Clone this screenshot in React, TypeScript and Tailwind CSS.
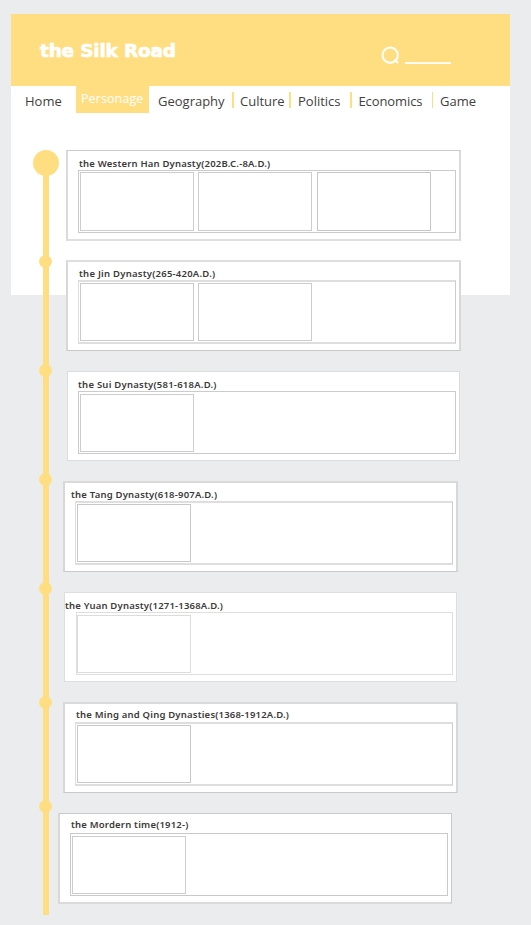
type Era = {
  title: string;
  titleClass: string;
  card: string;
  strip: string;
  frames: string[];
};

const eras: Era[] = [
  {
    title: "the Western Han Dynasty(202B.C.-8A.D.)",
    titleClass: "ml-[11px] leading-[23px] tracking-[0.19px]",
    card: "ml-[-6px] w-[395px] h-[91px] pt-px border-t border-x-2 border-b-2 border-x-[#dadada] border-t-[#cbcbcb] border-b-[#dfdfdf]",
    strip: "ml-[10px] w-[378px] h-[63px] pt-px border-[#cbcbcb]",
    frames: ["h-[59px] border-[#cdcdcd]", "ml-1 h-[59px] border-[#cdcdcd]", "ml-[5px] h-[59px] border-[#c6c6c6]"],
  },
  {
    title: "the Jin Dynasty(265-420A.D.)",
    titleClass: "ml-[11px] leading-[23px] tracking-[0.24px]",
    card: "mt-[19px] ml-[-6px] w-[395px] h-[91px] border-t-2 border-x-2 border-b border-x-[#d8d8d8] border-t-[#dedede] border-b-[#c9c9c9]",
    strip: "ml-[10px] w-[378px] h-[64px] border-t-2 border-b-2 pt-px border-[#dedede] border-r-[#cdcdcd]",
    frames: ["h-[58px] border-[#cbcbcb]", "ml-1 h-[58px] border-[#cdcdcd]"],
  },
  {
    title: "the Sui Dynasty(581-618A.D.)",
    titleClass: "ml-[10px] leading-[23px] tracking-[0.24px]",
    card: "mt-[20px] ml-[-5px] w-[393px] h-[90px] pt-px border border-[#dcdcdc]",
    strip: "ml-[10px] w-[378px] h-[63px] pt-[2px] border-[#cbcbcb]",
    frames: ["h-[58px] border-[#cdcdcd]"],
  },
  {
    title: "the Tang Dynasty(618-907A.D.)",
    titleClass: "ml-[6px] leading-[23px] tracking-[0.21px]",
    card: "mt-[20px] ml-[-9px] w-[395px] h-[91px] border-t-2 border-x-2 border-b border-x-[#d8d8d8] border-t-[#dadada] border-b-[#c9c9c9]",
    strip: "ml-[10px] w-[378px] h-[64px] border-t-2 border-b-2 pt-px border-[#dedede] border-r-[#cdcdcd]",
    frames: ["h-[58px] border-[#c9c9c9]"],
  },
  {
    title: "the Yuan Dynasty(1271-1368A.D.)",
    titleClass: "ml-0 leading-[23px] tracking-[0.2px]",
    card: "mt-[20px] ml-[-8px] w-[393px] h-[90px] pt-px border border-[#dedede]",
    strip: "ml-[11px] w-[377px] h-[63px] pt-[2px] border-[#dedede]",
    frames: ["h-[58px] border-[#dcdcdc] -ml-px"],
  },
  {
    title: "the Ming and Qing Dynasties(1368-1912A.D.)",
    titleClass: "ml-[11px] leading-[21px] tracking-[0.2px]",
    card: "mt-[20px] ml-[-9px] w-[395px] h-[91px] border-t-2 border-x-2 border-b border-x-[#d8d8d8] border-t-[#dadada] border-b-[#c9c9c9]",
    strip: "ml-[10px] w-[378px] h-[64px] border-t-2 border-b-2 pt-px border-[#dedede] border-r-[#cdcdcd]",
    frames: ["h-[58px] border-[#c9c9c9]"],
  },
  {
    title: "the Mordern time(1912-)",
    titleClass: "ml-[11px] leading-[19px] tracking-[0.2px]",
    card: "mt-[20px] ml-[-14px] w-[394px] h-[91px] pt-px border-t border-l-2 border-r border-b-2 border-l-[#d8d8d8] border-r-[#c9c9c9] border-t-[#c9c9c9] border-b-[#dadada]",
    strip: "ml-[10px] w-[378px] h-[63px] pt-[2px] border-[#c9c9c9]",
    frames: ["h-[58px] border-[#cdcdcd]"],
  },
];

const dots = ["mt-[78.5px]", "mt-[96px]", "mt-[96px]", "mt-[96.5px]", "mt-[101px]", "mt-[91px]"];

function Divider({ className }: { className: string }) {
  return <span className={`mt-[6px] h-4 w-[1.5px] shrink-0 bg-[#ffde82] ${className}`} />;
}

function Header() {
  return (
    <header className="flex h-[72px] shrink-0 items-start bg-[#ffde82] text-white">
      <h1 className="ml-[29px] mt-[25px] w-[340.5px] whitespace-nowrap font-['DejaVu_Sans'] text-[18.5px] font-bold leading-6 tracking-[-0.2px] [-webkit-text-stroke:0.7px_white]">
        the Silk Road
      </h1>
      <svg className="mt-[31px] h-5 w-5 shrink-0" viewBox="0 0 20 20" fill="none" stroke="white" strokeWidth="2">
        <circle cx="9.2" cy="10.2" r="7.6" />
        <path d="M13.8 14.4 17 18.2" />
      </svg>
      <span className="ml-[4px] mt-[48px] h-[1.5px] w-[46px] bg-white/90" />
    </header>
  );
}

function Nav() {
  return (
    <nav className="flex h-[27px] shrink-0 items-start whitespace-nowrap font-['Open_Sans'] text-[13px] leading-[30px] text-[#3f3f3f]">
      <a className="w-[65px] pl-[14px]">Home</a>
      <a className="h-[27px] w-[73px] bg-[#ffde82] pl-[5px] text-[12.5px] leading-[25px] tracking-[0.1px] text-white">Personage</a>
      <a className="w-[83px] pl-[9px]">Geography</a>
      <Divider className="mr-[6.5px]" />
      <a className="w-[49px]">Culture</a>
      <Divider className="mr-[7.5px]" />
      <a className="w-[52px]">Politics</a>
      <Divider className="mr-[7px]" />
      <a className="w-[73px] tracking-[-0.1px]">Economics</a>
      <Divider className="mr-[7px]" />
      <a>Game</a>
    </nav>
  );
}

function Timeline() {
  return (
    <div className="relative flex h-[765px] w-[26px] shrink-0 flex-col items-center">
      <span className="absolute left-[10.2px] top-[13px] h-[751.5px] w-[5.5px] bg-[#ffde82]" />
      <span className="h-[26px] w-[26px] shrink-0 rounded-full bg-[#ffde82]" />
      {dots.map((gap, i) => (
        <span key={i} className={`mr-[1px] h-[13px] w-[13px] shrink-0 rounded-full bg-[#ffde82] ${gap}`} />
      ))}
    </div>
  );
}

function EraCard({ era }: { era: Era }) {
  return (
    <section className={`shrink-0 bg-white ${era.card}`}>
      <h2 className={`h-[18px] whitespace-nowrap text-[9.5px] font-semibold text-[#3a3a3a] ${era.titleClass}`}>
        {era.title}
      </h2>
      <div className={`flex items-start border px-px ${era.strip}`}>
        {era.frames.map((frame, i) => (
          <div key={i} className={`w-[114px] shrink-0 border ${frame}`} />
        ))}
      </div>
    </section>
  );
}

export default function App() {
  return (
    <div className="h-[925px] w-[531px] overflow-hidden bg-[#ebecee] pl-[11px] pt-[14px] font-['Noto_Sans',sans-serif]">
      <div className="flex h-[281px] w-[499px] flex-col bg-white">
        <Header />
        <Nav />
        <main className="ml-[22px] mt-[37px] flex shrink-0 items-start">
          <Timeline />
          <div className="ml-[13px] flex flex-col">
            {eras.map((era) => (
              <EraCard key={era.title} era={era} />
            ))}
          </div>
        </main>
      </div>
    </div>
  );
}
